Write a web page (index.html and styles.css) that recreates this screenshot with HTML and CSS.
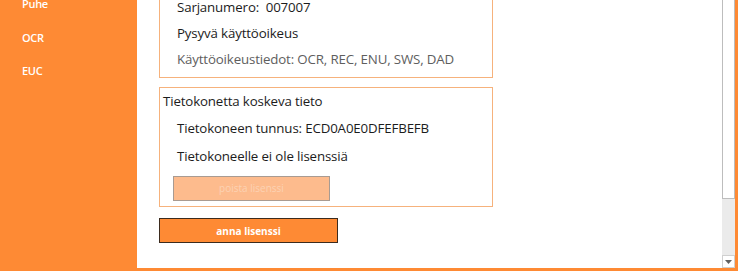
FILE: index.html
```html
<!DOCTYPE html>
<html>
<head>
<meta charset="utf-8">
<link rel="stylesheet" href="styles.css">
</head>
<body>
<div class="window">
  <nav class="sidebar">
    <div class="nav-item">Puhe</div>
    <div class="nav-item">OCR</div>
    <div class="nav-item">EUC</div>
  </nav>
  <main class="main">
    <div class="content">
      <section class="box box-top">
        <p class="row">Sarjanumero:&nbsp; 007007</p>
        <p class="row">Pysyvä käyttöoikeus</p>
        <p class="row muted">Käyttöoikeustiedot: OCR, REC, ENU, SWS, DAD</p>
      </section>
      <section class="box box-pc">
        <p class="box-title">Tietokonetta koskeva tieto</p>
        <p class="row">Tietokoneen tunnus: ECD0A0E0DFEFBEFB</p>
        <p class="row">Tietokoneelle ei ole lisenssiä</p>
        <button class="btn btn-disabled">poista lisenssi</button>
      </section>
      <button class="btn btn-primary">anna lisenssi</button>
    </div>
    <div class="scrollbar">
      <div class="thumb"></div>
      <div class="track"></div>
      <div class="arrow"><svg width="7" height="4" viewBox="0 0 7 4"><path d="M0 0H7L3.5 4Z" fill="#606060"/></svg></div>
    </div>
  </main>
</div>
</body>
</html>
```
FILE: styles.css
```css
html, body {
  margin: 0;
  padding: 0;
  background: #ffffff;
}
body {
  width: 738px;
  height: 271px;
  overflow: hidden;
  font-family: "Open Sans", "Noto Sans", sans-serif;
}
.window {
  display: flex;
  height: 271px;
  background: #fe8a34;
}
.sidebar {
  width: 137px;
  flex: none;
  display: flex;
  flex-direction: column;
  gap: 17.5px;
  padding: 0 0 0 22px;
  box-sizing: border-box;
  margin-top: -4px;
}
.nav-item {
  color: #ffffff;
  font-size: 11px;
  line-height: 16px;
  font-weight: 600;
  letter-spacing: -0.3px;
}
.main {
  flex: 1;
  display: flex;
  background: #ffffff;
  margin: 0 3px 3px 0;
  height: 268px;
  overflow: hidden;
}
.content {
  flex: 1;
  display: flex;
  flex-direction: column;
  align-items: flex-start;
  padding-left: 22px;
}
.box {
  width: 334px;
  box-sizing: border-box;
  border: 1px solid #f6b27c;
}
.box p {
  margin: 0;
}
.box-top {
  border-top: none;
  padding: 0 0 0 17px;
  height: 78px;
}
.row {
  font-size: 13.3px;
  line-height: 18px;
  color: #1c1c1c;
  margin-bottom: 10px !important;
  letter-spacing: -0.15px;
}
.box-top .row {
  margin-bottom: 8px !important;
}
.box-top .row:first-child {
  margin-top: -2px;
}
.box-top .row.muted {
  margin-top: 2px;
}
.muted {
  color: #5e5e5e;
}
.box-pc {
  margin-top: 9px;
  padding: 4px 0 4px 3px;
  height: 120px;
}
.box-title {
  font-size: 13.3px;
  line-height: 18px;
  color: #1c1c1c;
  letter-spacing: -0.15px;
  margin-bottom: 9px !important;
}
.box-pc .row {
  margin-left: 14px;
}
.btn {
  font-family: inherit;
  font-size: 10px;
  font-weight: 700;
  padding: 0;
  box-sizing: border-box;
  height: 25px;
  cursor: default;
}
.btn-disabled {
  margin-left: 10px;
  width: 157px;
  background: #fdbb8d;
  border: 1px solid #a89b92;
  color: #fcd2b3;
  font-weight: 400;
}
.btn-primary {
  margin-top: 11px;
  width: 179px;
  background: #fe8a34;
  border: 1px solid #3b2b1e;
  color: #ffffff;
}
.scrollbar {
  width: 13px;
  flex: none;
  display: flex;
  flex-direction: column;
  background: #ebebeb;
}
.thumb {
  height: 199px;
  box-sizing: border-box;
  background: #ffffff;
  border: 1px solid #bdbdbd;
  border-top: none;
}
.track {
  flex: 1;
}
.arrow {
  height: 13px;
  background: #ffffff;
  border: 1px solid #d0d0d0;
  box-sizing: border-box;
  display: flex;
  align-items: center;
  justify-content: center;
}
```
